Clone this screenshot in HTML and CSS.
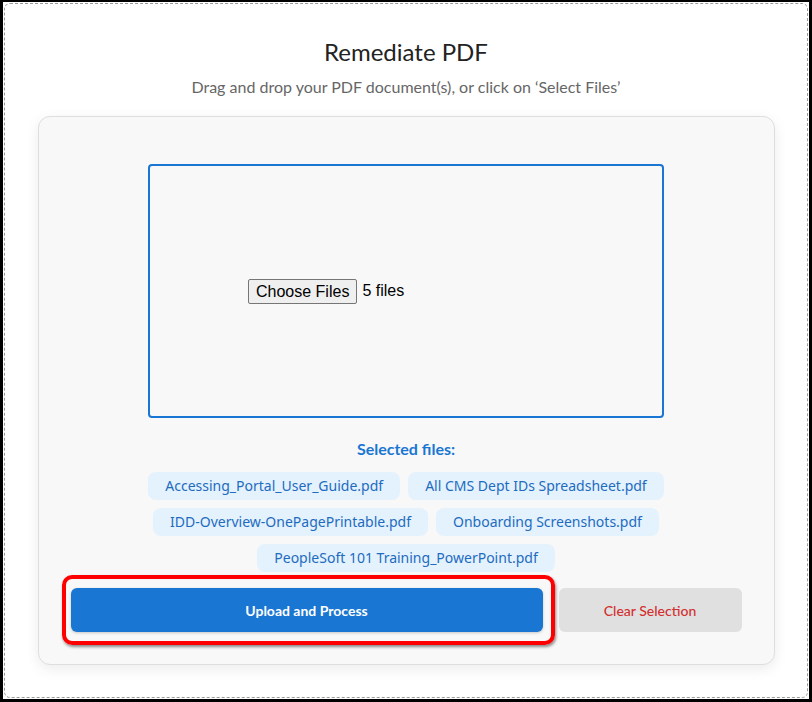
FILE: index.html
```html
<!doctype html>
<html lang="en">
<head>
  <meta charset="UTF-8">
  <meta name="viewport" content="width=device-width, initial-scale=1.0">
  <title>Remediate PDF</title>
  <link rel="stylesheet" href="styles.css">
</head>
<body>
  <div class="page">
    <div class="frame">
      <h1 class="title">Remediate PDF</h1>
      <p class="subtitle">Drag and drop your PDF document(s), or click on ‘Select Files’</p>

      <div class="card">
        <div class="dropzone">
          <div class="file-input">
            <span class="choose-btn">Choose Files</span>
            <span class="file-count">5 files</span>
          </div>
        </div>

        <div class="selected-title">Selected files:</div>
        <div class="chips">
          <span class="chip">Accessing_Portal_User_Guide.pdf</span>
          <span class="chip">All CMS Dept IDs Spreadsheet.pdf</span>
          <span class="chip">IDD-Overview-OnePagePrintable.pdf</span>
          <span class="chip">Onboarding Screenshots.pdf</span>
          <span class="chip">PeopleSoft 101 Training_PowerPoint.pdf</span>
        </div>

        <div class="actions">
          <div class="upload-wrap">
            <button class="btn btn-upload">Upload and Process</button>
          </div>
          <button class="btn btn-clear">Clear Selection</button>
        </div>
      </div>
    </div>
  </div>
</body>
</html>
```

FILE: styles.css
```css
html, body {
    margin: 0;
    height: 100%;
}

body {
    background: #000;
    padding: 2px 3px 3px 3px;
    box-sizing: border-box;
    font-family: Lato, "Open Sans", sans-serif;
}

.page {
    background: #fff;
    height: 100%;
    padding: 1px;
    box-sizing: border-box;
}

.frame {
    height: 100%;
    box-sizing: border-box;
    border: 1px dashed #9a9a9a;
    border-radius: 6px;
    padding-top: 33px;
}

.title {
    margin: 0;
    text-align: center;
    font-size: 24px;
    font-weight: 400;
    color: #222;
    line-height: 30px;
}

.subtitle {
    margin: 10px 0 0;
    text-align: center;
    font-size: 16px;
    color: #666;
    line-height: 20px;
}

.card {
    width: 737px;
    box-sizing: border-box;
    margin: 19px auto 0;
    padding: 47px 32px 32px;
    background: #f8f8f8;
    border: 1px solid #dedede;
    border-radius: 12px;
    box-shadow: 0 4px 14px rgba(0, 0, 0, 0.08);
}

.dropzone {
    width: 516px;
    height: 254px;
    box-sizing: border-box;
    margin: 0 auto;
    border: 2px solid #1976d2;
    border-radius: 4px;
    display: flex;
    align-items: center;
    justify-content: center;
}

.file-input {
    width: 316px;
    display: flex;
    align-items: center;
    font-family: "Liberation Sans", Arial, sans-serif;
    font-size: 16px;
    color: #000;
}

.choose-btn {
    display: inline-block;
    padding: 1px 7px;
    height: 21px;
    line-height: 21px;
    background: #efefef;
    border: 1px solid #767676;
    border-radius: 2px;
    margin-right: 5px;
}

.selected-title {
    margin-top: 20px;
    text-align: center;
    color: #1976d2;
    font-size: 16px;
    font-weight: 700;
    line-height: 22px;
}

.chips {
    width: 600px;
    margin: 12px auto 0;
    display: flex;
    flex-wrap: wrap;
    justify-content: center;
    gap: 8px;
}

.chip {
    background: #e3f2fd;
    color: #1e6bc0;
    border-radius: 8px;
    padding: 0 17px;
    height: 28px;
    line-height: 28px;
    font-family: "Noto Sans", "Open Sans", sans-serif;
    font-size: 14px;
}

.actions {
    display: flex;
    gap: 16px;
    margin-top: 16px;
}

.upload-wrap {
    flex: 1;
    position: relative;
    display: flex;
}

.upload-wrap::after {
    content: "";
    position: absolute;
    left: -9px;
    top: -13px;
    right: -12px;
    bottom: -13px;
    border: 4px solid #ff0000;
    border-radius: 10px;
    box-shadow: 1px 2px 3px rgba(0, 0, 0, 0.45);
    pointer-events: none;
}

.btn {
    height: 44px;
    border: none;
    border-radius: 6px;
    font-family: Lato, sans-serif;
    font-size: 14px;
    cursor: pointer;
}

.btn-upload {
    flex: 1;
    background: #1976d2;
    color: #fff;
    font-weight: 700;
    box-shadow: 0 1px 3px rgba(0, 0, 0, 0.2);
}

.btn-clear {
    width: 183px;
    background: #e0e0e0;
    color: #d32f2f;
    font-weight: 500;
}
```
